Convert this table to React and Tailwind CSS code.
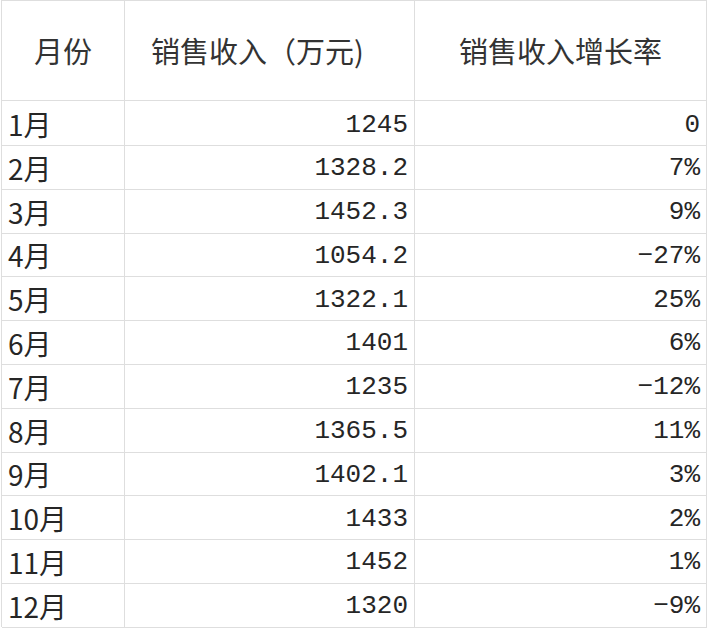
const rows = [
  ['1月', '1245', '0'],
  ['2月', '1328.2', '7%'],
  ['3月', '1452.3', '9%'],
  ['4月', '1054.2', '−27%'],
  ['5月', '1322.1', '25%'],
  ['6月', '1401', '6%'],
  ['7月', '1235', '−12%'],
  ['8月', '1365.5', '11%'],
  ['9月', '1402.1', '3%'],
  ['10月', '1433', '2%'],
  ['11月', '1452', '1%'],
  ['12月', '1320', '−9%'],
]

const cjk = { fontFamily: '"Noto Sans CJK SC", "Noto Sans", sans-serif' }
const mono = { fontFamily: '"Liberation Mono", "Noto Sans CJK SC", monospace' }

export default function App() {
  return (
    <div className="w-[708px] h-[628px] bg-white overflow-hidden">
      <div className="ml-px w-[706px] border-t border-l border-[#dedede] text-[#262626]">
        <div className="grid grid-cols-[123px_290px_1fr] h-[100px] text-[29px] text-[#333]" style={cjk}>
          <div className="flex items-center justify-center border-r border-b border-[#dedede]">月份</div>
          <div className="flex items-center justify-center pr-[24px] border-r border-b border-[#dedede]">销售收入（万元)</div>
          <div className="flex items-center justify-center border-r border-b border-[#dedede]">销售收入增长率</div>
        </div>
        {rows.map(([m, v, r]) => (
          <div key={m} className="grid grid-cols-[123px_290px_1fr] h-[43.8px]">
            <div className="flex items-center pl-[6px] pt-[2px] text-[28px] border-r border-b border-[#dedede]" style={cjk}>{m}</div>
            <div className="flex items-center justify-end pr-[6px] pt-[4px] text-[26px] border-r border-b border-[#dedede]" style={mono}>{v}</div>
            <div className="flex items-center justify-end pr-[6px] pt-[4px] text-[26px] border-r border-b border-[#dedede]" style={mono}>{r}</div>
          </div>
        ))}
      </div>
    </div>
  )
}
